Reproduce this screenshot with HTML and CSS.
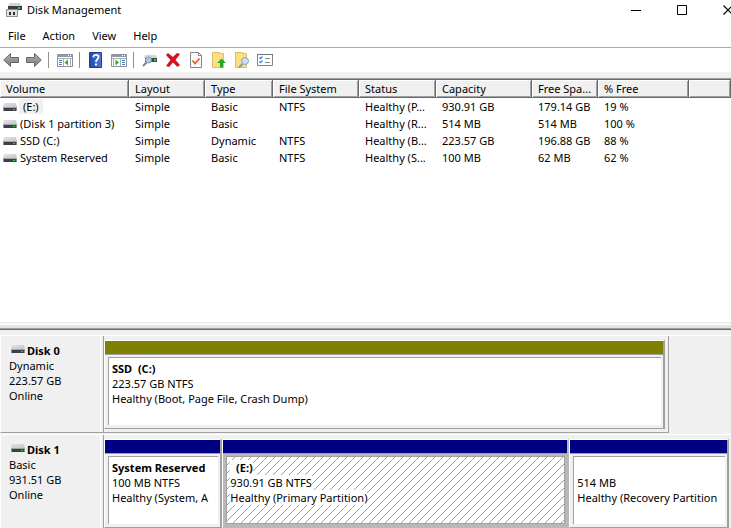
FILE: index.html
```html
<!DOCTYPE html>
<html lang="en">
<head>
    <meta charset="UTF-8">
    <title>Disk Management</title>
    <link rel="stylesheet" href="styles.css">
</head>
<body>
<svg class="defs" width="0" height="0">
    <defs>
        <linearGradient id="driveTop" x1="0" y1="0" x2="1" y2="1">
            <stop offset="0" stop-color="#e2e4e6"/>
            <stop offset="1" stop-color="#c2c6ca"/>
        </linearGradient>
        <linearGradient id="arrowFill" x1="0" y1="0" x2="0" y2="1">
            <stop offset="0" stop-color="#b5b5b5"/>
            <stop offset="1" stop-color="#777"/>
        </linearGradient>
        <linearGradient id="helpFill" x1="0" y1="0" x2="1" y2="0">
            <stop offset="0" stop-color="#2446a8"/>
            <stop offset="1" stop-color="#4a78dc"/>
        </linearGradient>
        <pattern id="hatch" width="8" height="8" patternUnits="userSpaceOnUse">
            <path d="M0 7h1v1H0zM1 6h1v1H1zM2 5h1v1H2zM3 4h1v1H3zM4 3h1v1H4zM5 2h1v1H5zM6 1h1v1H6zM7 0h1v1H7z" fill="#a0a0a0"/>
        </pattern>
        <symbol id="drive" viewBox="0 0 14 8">
            <path d="M1 0h12l1 4H0z" fill="url(#driveTop)"/>
            <path d="M0 4h14v1H0z" fill="#a4a7aa"/>
            <path d="M1 5h12v3H1z" fill="#3c3f43"/>
            <path d="M0 5h1v3H0zM13 5h1v3h-1z" fill="#8a8d90"/>
            <path d="M10 6h2v1h-2z" fill="#22e03a"/>
        </symbol>
    </defs>
</svg>

<header class="titlebar">
    <svg class="app-icon" width="16" height="16" viewBox="0 0 16 16">
        <path d="M4 1h10l2 3H2z" fill="#d4d7da"/>
        <path d="M2 4h14v4H2z" fill="#3b3e42"/>
        <path d="M12 5h2v2h-2z" fill="#22d83a"/>
        <path d="M.5 7.500h11v7H.5z" fill="#e2e2e2" stroke="#8d8d8d"/>
        <path d="M3 10h2v3H3zM7 10h2v3H7z" fill="#333"/>
    </svg>
    <h1>Disk Management</h1>
    <div class="window-buttons">
        <button aria-label="Minimize">
            <svg width="10" height="10" viewBox="0 0 10 10"><path d="M0 5h10v1H0z"/></svg>
        </button>
        <button aria-label="Maximize">
            <svg width="10" height="10" viewBox="0 0 10 10"><path d="M.5.5h9v9h-9z" fill="none" stroke="#000"/></svg>
        </button>
        <button aria-label="Close">
            <svg width="10" height="10" viewBox="0 0 10 10"><path d="M.5.5l9 9M9.5.5l-9 9" fill="none" stroke="#000" stroke-width="1.2"/></svg>
        </button>
    </div>
</header>

<nav class="menu">
    <button>File</button>
    <button>Action</button>
    <button>View</button>
    <button>Help</button>
</nav>

<div class="toolbar">
    <div class="group">
        <button aria-label="Back">
            <svg width="16" height="16" viewBox="0 0 16 16"><path d="M.7 8l6.800-6.500v4h8v5h-8v4z" fill="url(#arrowFill)" stroke="#666"/></svg>
        </button>
        <button aria-label="Forward">
            <svg width="16" height="16" viewBox="0 0 16 16"><path d="M15.300 8L8.500 1.500v4h-8v5h8v4z" fill="url(#arrowFill)" stroke="#666"/></svg>
        </button>
    </div>
    <div class="group">
        <button aria-label="Show console tree">
            <svg width="16" height="16" viewBox="0 0 16 16">
                <path d="M.5 2.500h15v12H.5z" fill="#fff" stroke="#8a929a"/>
                <path d="M1 3h14v2H1z" fill="#8f9aa5"/><path d="M11 3h1v1h-1zM13 3h1v1h-1z" fill="#fff"/>
                <path d="M1 6h14v1H1zM6 7h1v7H6zM13 7h1v7h-1z" fill="#a8afb6"/>
                <path d="M2 8h3v1H2zM2 10h3v1H2zM2 12h3v1H2z" fill="#4b7fc0"/>
                <path d="M11 7.500v6L7.500 10.500z" fill="#35a829"/>
            </svg>
        </button>
    </div>
    <div class="group">
        <button aria-label="Help topics">
            <svg width="16" height="16" viewBox="0 0 16 16">
                <path d="M1.500.5h12v15h-12z" fill="url(#helpFill)" stroke="#1f3d92"/>
                <path d="M5.500 5.500V4.800C5.500 2.200 10.500 2.200 10.500 5c0 2-2.500 2.200-2.500 5" fill="none" stroke="#fff" stroke-width="1.800"/>
                <path d="M7 11.500h2v2H7z" fill="#fff"/>
            </svg>
        </button>
        <button aria-label="Show action pane">
            <svg width="16" height="16" viewBox="0 0 16 16">
                <path d="M.5 2.500h15v12H.5z" fill="#fff" stroke="#8a929a"/>
                <path d="M1 3h14v2H1z" fill="#8f9aa5"/><path d="M11 3h1v1h-1zM13 3h1v1h-1z" fill="#fff"/>
                <path d="M1 6h14v1H1zM9 7h1v7H9zM2 7h1v7H2z" fill="#a8afb6"/>
                <path d="M11 8h3v1h-3zM11 10h3v1h-3zM11 12h3v1h-3z" fill="#4b7fc0"/>
                <path d="M4.500 7.500v6L8 10.500z" fill="#35a829"/>
            </svg>
        </button>
    </div>
    <div class="group">
        <button aria-label="Rescan disks">
            <svg width="16" height="16" viewBox="0 0 16 16">
                <path d="M3 3h11l1 3H2z" fill="#d3d6d9"/><path d="M3 6h12v4H3z" fill="#43474b"/>
                <path d="M12 7h2v2h-2z" fill="#22d83a"/>
                <circle cx="6.500" cy="8" r="3" fill="#a9cbe6" stroke="#7b98b0"/>
                <path d="M4.500 10.500L1 14" stroke="#6b8299" stroke-width="1.800"/>
            </svg>
        </button>
        <button aria-label="Delete">
            <svg width="16" height="16" viewBox="0 0 16 16"><path d="M1 3l2-2 5 4 4-4 3 1-4.500 6L15 13l-2.500 2L8 10.500 4 15l-3-1 4.500-6z" fill="#d9101c"/></svg>
        </button>
        <button aria-label="Properties">
            <svg width="16" height="16" viewBox="0 0 16 16">
                <path d="M2.500.5h8l3 3v12h-11z" fill="#fafafa" stroke="#858585"/><path d="M10.500.5v3h3" fill="none" stroke="#858585"/>
                <path d="M4.500 8.500l2.500 3 4.500-5" fill="none" stroke="#ec5a27" stroke-width="1.800"/>
            </svg>
        </button>
        <button aria-label="Up one level">
            <svg width="16" height="16" viewBox="0 0 16 16">
                <path d="M1.500.5h7v1h4v14h-11z" fill="#fbdf83" stroke="#dfbf5c"/>
                <path d="M10.500 6.500l4.500 4.500h-3v4.500H9V11H6z" fill="#27a72a"/>
            </svg>
        </button>
        <button aria-label="Explore">
            <svg width="16" height="16" viewBox="0 0 16 16">
                <path d="M1.500.5h7v1h4v14h-11z" fill="#fbdf83" stroke="#dfbf5c"/>
                <path d="M8.500 12L5 15.500" stroke="#8b9298" stroke-width="1.800"/>
                <circle cx="11" cy="9" r="3.500" fill="#c5e1f5" stroke="#86a5bd"/>
            </svg>
        </button>
        <button aria-label="Settings">
            <svg width="16" height="16" viewBox="0 0 16 16">
                <path d="M.5 2.500h15v11H.5z" fill="#fff" stroke="#7d858d"/><path d="M0 2h16v1H0z" fill="#6d757d"/>
                <path d="M2.500 5.500l1 1 2-2M2.500 9.500l1 1 2-2" fill="none" stroke="#3989d6" stroke-width="1.300"/>
                <path d="M8 6h5v1H8zM8 10h5v1H8z" fill="#858c93"/>
            </svg>
        </button>
    </div>
</div>

<main>
    <section class="volumes">
        <table>
            <colgroup>
                <col class="c-volume"><col class="c-layout"><col class="c-type"><col class="c-fs"><col class="c-status">
                <col class="c-capacity"><col class="c-space"><col class="c-free"><col>
            </colgroup>
            <thead>
            <tr>
                <th>Volume</th><th>Layout</th><th>Type</th><th>File System</th><th>Status</th>
                <th>Capacity</th><th>Free Spa...</th><th>% Free</th><th></th>
            </tr>
            </thead>
            <tbody>
            <tr>
                <td><svg class="drive" width="14" height="8"><use href="#drive"/></svg><span class="focused">(E:)</span></td>
                <td>Simple</td><td>Basic</td><td>NTFS</td><td>Healthy (P...</td><td>930.91 GB</td><td>179.14 GB</td><td>19 %</td><td></td>
            </tr>
            <tr>
                <td><svg class="drive" width="14" height="8"><use href="#drive"/></svg><span>(Disk 1 partition 3)</span></td>
                <td>Simple</td><td>Basic</td><td></td><td>Healthy (R...</td><td>514 MB</td><td>514 MB</td><td>100 %</td><td></td>
            </tr>
            <tr>
                <td><svg class="drive" width="14" height="8"><use href="#drive"/></svg><span>SSD (C:)</span></td>
                <td>Simple</td><td>Dynamic</td><td>NTFS</td><td>Healthy (B...</td><td>223.57 GB</td><td>196.88 GB</td><td>88 %</td><td></td>
            </tr>
            <tr>
                <td><svg class="drive" width="14" height="8"><use href="#drive"/></svg><span>System Reserved</span></td>
                <td>Simple</td><td>Basic</td><td>NTFS</td><td>Healthy (S...</td><td>100 MB</td><td>62 MB</td><td>62 %</td><td></td>
            </tr>
            </tbody>
        </table>
    </section>

    <div class="splitter"></div>

    <section class="disks">
        <article class="disk">
            <div class="disk-label">
                <h2><svg width="14" height="8"><use href="#drive"/></svg>Disk 0</h2>
                <p>Dynamic</p>
                <p>223.57 GB</p>
                <p>Online</p>
            </div>
            <div class="partitions framed">
                <div class="partition dynamic">
                    <div class="bar"></div>
                    <div class="info">
                        <h3>SSD&nbsp; (C:)</h3>
                        <p>223.57 GB NTFS</p>
                        <p>Healthy (Boot, Page File, Crash Dump)</p>
                    </div>
                </div>
            </div>
        </article>
        <article class="disk">
            <div class="disk-label">
                <h2><svg width="14" height="8"><use href="#drive"/></svg>Disk 1</h2>
                <p>Basic</p>
                <p>931.51 GB</p>
                <p>Online</p>
            </div>
            <div class="partitions">
                <div class="partition small">
                    <div class="bar"></div>
                    <div class="info">
                        <h3>System Reserved</h3>
                        <p>100 MB NTFS</p>
                        <p>Healthy (System, A</p>
                    </div>
                </div>
                <div class="partition large selected">
                    <div class="bar"></div>
                    <div class="info">
                        <svg class="hatch" width="100%" height="100%"><rect width="100%" height="100%" fill="url(#hatch)"/></svg>
                        <h3><span>&nbsp; (E:)</span></h3>
                        <p><span>930.91 GB NTFS</span></p>
                        <p><span>Healthy (Primary Partition)</span></p>
                    </div>
                </div>
                <div class="partition medium">
                    <div class="bar"></div>
                    <div class="info">
                        <h3>&nbsp;</h3>
                        <p>514 MB</p>
                        <p>Healthy (Recovery Partition</p>
                    </div>
                </div>
            </div>
        </article>
    </section>
</main>
</body>
</html>
```
FILE: styles.css
```css
* {
    margin: 0;
    padding: 0;
    box-sizing: border-box;
}

body {
    display: flex;
    flex-direction: column;
    min-height: 100vh;
    overflow-x: hidden;
    background: #fff;
    color: #000;
    font: 11px/15px "Noto Sans", "Open Sans", sans-serif;
}

button {
    border: none;
    background: none;
    font: inherit;
    color: inherit;
}

svg {
    display: block;
    flex: none;
}

.defs {
    position: absolute;
}

/* title bar */
.titlebar {
    display: flex;
    align-items: center;
    height: 19px;
    padding-left: 6px;
}

.titlebar h1 {
    flex: 1;
    margin-left: 5px;
    font-size: 11px;
    font-weight: normal;
}

.window-buttons {
    display: flex;
    gap: 36px;
    margin-right: -2px;
}

/* menu */
.menu {
    display: flex;
    gap: 17px;
    height: 28px;
    padding: 5px 8px 0;
}

.menu button {
    height: 23px;
}

/* toolbar */
.toolbar {
    display: flex;
    align-items: center;
    height: 25px;
    padding-left: 3px;
    border-top: 1px solid #a8a8b0;
}

.group {
    display: flex;
    gap: 7px;
}

.group + .group {
    margin-left: 6px;
    padding-left: 8px;
    border-left: 1px solid #909090;
}

.toolbar button {
    height: 16px;
}

main {
    flex: 1;
    display: flex;
    flex-direction: column;
    padding-top: 6px;
    background: #f0f0f0;
}

/* volume list */
.volumes {
    flex: 1;
    background: #fff;
    border-top: 1px solid #a0a0a0;
}

table {
    width: 100%;
    table-layout: fixed;
    border-collapse: separate;
    border-spacing: 0;
    border-top: 1px solid #696969;
}

.c-volume {
    width: 129px;
}

.c-layout {
    width: 76px;
}

.c-type {
    width: 68px;
}

.c-fs {
    width: 86px;
}

.c-status {
    width: 77px;
}

.c-capacity {
    width: 96px;
}

.c-space {
    width: 66px;
}

.c-free {
    width: 91px;
}

th {
    height: 18px;
    padding-left: 6px;
    background: #f0f0f0;
    border-right: 1px solid #696969;
    border-bottom: 1px solid #696969;
    box-shadow: inset 1px 1px #fff, inset -1px -1px #a0a0a0;
    font-weight: normal;
    line-height: 17px;
    text-align: left;
    white-space: nowrap;
}

td {
    height: 17px;
    padding-left: 6px;
    white-space: nowrap;
}

td:first-child {
    display: flex;
    align-items: center;
    padding-left: 3px;
}

td span {
    padding-left: 3px;
}

td .focused {
    margin-left: 2px;
    padding: 0 4px;
    background: #f0f0f0;
}

.splitter {
    height: 8px;
    border-top: 2px solid #f0f0f0;
    border-bottom: 1px solid #696969;
    background: #e3e3e3;
    box-shadow: inset 0 1px #fff, inset 0 -1px #a0a0a0;
}

/* disk map */
.disks {
    padding-top: 5px;
}

.disk {
    display: flex;
    height: 99px;
    border-top: 1px solid #fff;
}

.disk + .disk {
    height: 94px;
}

.disk-label {
    flex: none;
    width: 104px;
    margin-bottom: 1px;
    padding: 7px 0 0 8px;
    border-left: 1px solid #fff;
    border-right: 1px solid #a0a0a0;
    border-bottom: 1px solid #a0a0a0;
    box-shadow: inset -2px 0 #f0f0f0, inset -3px 0 #fff;
}

.disk + .disk .disk-label {
    margin-bottom: 0;
    border-bottom: none;
}

h2,
h3 {
    font-size: 11px;
    font-weight: bold;
}

h2 {
    display: flex;
    gap: 2px;
    padding-left: 2px;
}

h2 svg {
    margin-top: 2px;
}

.partitions {
    flex: 1;
    display: flex;
    min-width: 0;
    padding: 4px 2px 0 0;
}

.framed {
    flex: 0.9 1 0;
    padding: 4px 3px 3px 0;
    margin-bottom: 1px;
    border-right: 1px solid #a0a0a0;
    border-bottom: 1px solid #a0a0a0;
}

.partition {
    flex: 1 1 0;
    display: flex;
    flex-direction: column;
    height: 89px;
    min-width: 0;
    border-top: 1px solid #fff;
    border-left: 1px solid #fff;
    border-right: 2px solid #a0a0a0;
    border-bottom: 1px solid #a0a0a0;
}

.small {
    flex-grow: 117;
}

.large {
    flex-grow: 349;
}

.medium {
    flex-grow: 159;
}

.bar {
    height: 14px;
    background: #000082;
    border-bottom: 1px solid #a0a0a0;
}

.dynamic .bar {
    background: #808000;
}

.info {
    position: relative;
    flex: 1;
    margin: 2px 2px 3px 3px;
    padding: 3px 3px 0;
    overflow: hidden;
    background: #fff;
    border-top: 1px solid #a0a0a0;
    border-left: 1px solid #a0a0a0;
    white-space: nowrap;
}

.selected {
    background: #b8b8b8;
    border-right-color: #b8b8b8;
    border-bottom-color: #b8b8b8;
}

.selected .info {
    border: 1px solid #a0a0a0;
}

.hatch {
    position: absolute;
    top: 0;
    left: 0;
}

.selected span {
    position: relative;
    background: #fff;
}
```
